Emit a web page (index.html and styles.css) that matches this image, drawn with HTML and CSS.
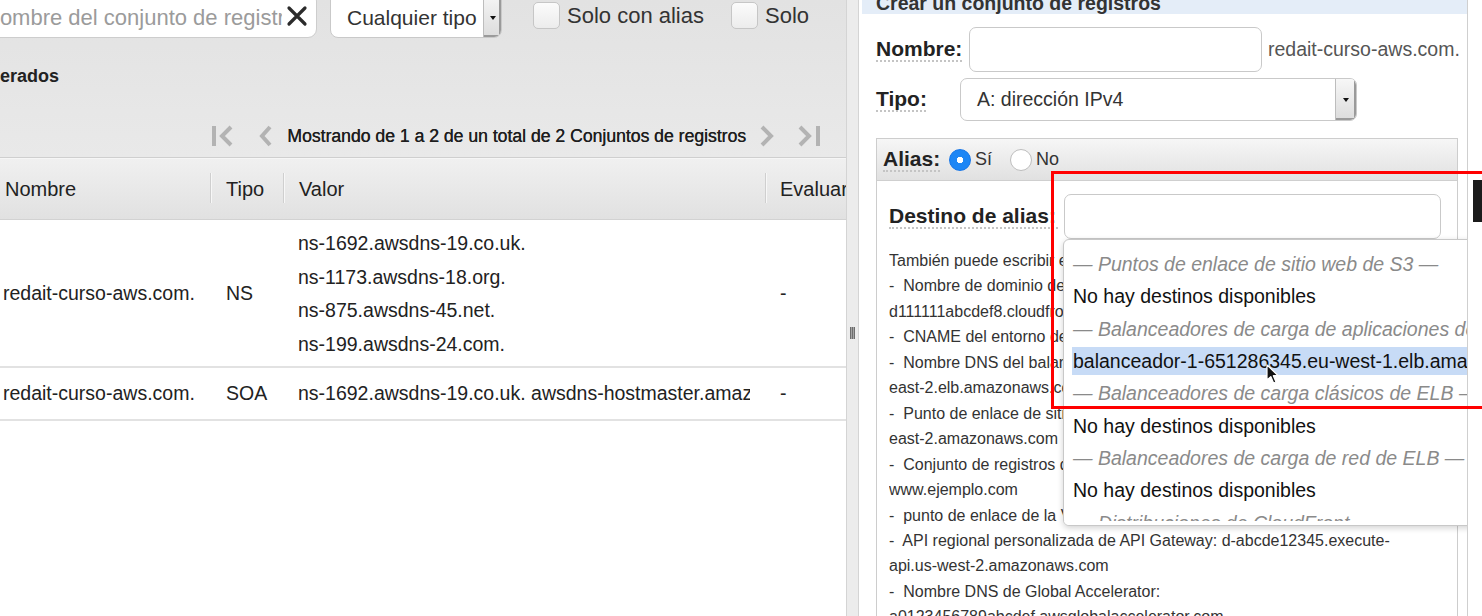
FILE: index.html
```html
<!DOCTYPE html>
<html lang="es">
<head>
<meta charset="utf-8">
<title>Route 53 - Crear un conjunto de registros</title>
<link rel="stylesheet" href="styles.css">
</head>
<body>
<div class="app">
  <section class="left">
    <div class="left-top">
      <div class="toolbar">
        <div class="search">
          <span class="placeholder">Nombre del conjunto de registros</span>
          <svg class="clear" width="22" height="22" viewBox="0 0 22 22"><path d="M3 3 L19 19 M19 3 L3 19" stroke="#2b2b2b" stroke-width="3.2" stroke-linecap="round"/></svg>
        </div>
        <div class="select type-select">
          <span class="select-text">Cualquier tipo</span>
          <span class="select-arrow"><i class="tri"></i></span>
        </div>
        <label class="check"><span class="box"></span>Solo con alias</label>
        <label class="check check-2"><span class="box"></span>Solo</label>
      </div>
      <div class="section-title">erados</div>
      <div class="pager">
        <svg class="pg-first" width="24" height="24" viewBox="0 0 24 24"><rect x="1" y="2" width="4" height="20" fill="#b3b3b3"/><path d="M20 3 L11 12 L20 21" fill="none" stroke="#b3b3b3" stroke-width="4"/></svg>
        <svg class="pg-prev" width="14" height="22" viewBox="0 0 14 22"><path d="M12 2 L4 11 L12 20" fill="none" stroke="#b3b3b3" stroke-width="4"/></svg>
        <span class="pg-text">Mostrando de 1 a 2 de un total de 2 Conjuntos de registros</span>
        <svg class="pg-next" width="15" height="22" viewBox="0 0 15 22"><path d="M2 2 L11 11 L2 20" fill="none" stroke="#b3b3b3" stroke-width="4"/></svg>
        <svg class="pg-last" width="25" height="24" viewBox="0 0 25 24"><path d="M3 3 L12 12 L3 21" fill="none" stroke="#b3b3b3" stroke-width="4"/><rect x="19" y="2" width="4" height="20" fill="#b3b3b3"/></svg>
      </div>
    </div>
    <div class="grid">
      <div class="grid-head">
        <div class="hc c-name">Nombre</div>
        <div class="hc c-type sep">Tipo</div>
        <div class="hc c-value sep">Valor</div>
        <div class="hc c-eval sep">Evaluar</div>
      </div>
      <div class="grid-row row-ns">
        <div class="cell c-name">redait-curso-aws.com.</div>
        <div class="cell c-type">NS</div>
        <div class="cell c-value values">
          <div>ns-1692.awsdns-19.co.uk.</div>
          <div>ns-1173.awsdns-18.org.</div>
          <div>ns-875.awsdns-45.net.</div>
          <div>ns-199.awsdns-24.com.</div>
        </div>
        <div class="cell c-eval">-</div>
      </div>
      <div class="grid-row row-soa">
        <div class="cell c-name">redait-curso-aws.com.</div>
        <div class="cell c-type">SOA</div>
        <div class="cell c-value"><span class="clip">ns-1692.awsdns-19.co.uk. awsdns-hostmaster.amazon.com. 1 7200 900 1209600 86400</span></div>
        <div class="cell c-eval">-</div>
      </div>
    </div>
  </section>

  <div class="splitter"><span class="grip"></span></div>

  <section class="right">
    <div class="panel-head"><span>Crear un conjunto de registros</span></div>
    <div class="form-row row-nombre">
      <span class="lbl">Nombre:</span>
      <span class="input name-input"></span>
      <span class="suffix">redait-curso-aws.com.</span>
    </div>
    <div class="form-row row-tipo">
      <span class="lbl lbl-tipo">Tipo:</span>
      <div class="select tipo-select">
        <span class="select-text">A: dirección IPv4</span>
        <span class="select-arrow"><i class="tri"></i></span>
      </div>
    </div>
    <div class="alias-box">
      <div class="alias-head">
        <span class="lbl">Alias:</span>
        <span class="radio on"></span><span class="radio-text">Sí</span>
        <span class="radio"></span><span class="radio-text">No</span>
      </div>
      <div class="alias-body">
        <div class="dest-row">
          <span class="lbl">Destino de alias:</span>
          <div class="dest-wrap">
            <span class="input dest-input"></span>
            <div class="dropdown">
              <div class="opt grp">— Puntos de enlace de sitio web de S3 —</div>
              <div class="opt">No hay destinos disponibles</div>
              <div class="opt grp">— Balanceadores de carga de aplicaciones de ELB —</div>
              <div class="opt sel">balanceador-1-651286345.eu-west-1.elb.amazonaws.com.</div>
              <div class="opt grp">— Balanceadores de carga clásicos de ELB —</div>
              <div class="opt">No hay destinos disponibles</div>
              <div class="opt grp">— Balanceadores de carga de red de ELB —</div>
              <div class="opt">No hay destinos disponibles</div>
              <div class="opt grp">— Distribuciones de CloudFront —</div>
            </div>
          </div>
        </div>
        <div class="help">
          <div>También puede escribir el nombre de dominio de los siguientes recursos:</div>
          <div>-  Nombre de dominio de la distribución de CloudFront:</div>
          <div>d111111abcdef8.cloudfront.net</div>
          <div>-  CNAME del entorno de Elastic Beanstalk: example.elasticbeanstalk.com</div>
          <div>-  Nombre DNS del balanceador de carga de ELB: example-1.us-</div>
          <div>east-2.elb.amazonaws.com</div>
          <div>-  Punto de enlace de sitio web de S3: s3-website.us-</div>
          <div>east-2.amazonaws.com</div>
          <div>-  Conjunto de registros de recursos en esta zona alojada:</div>
          <div>www.ejemplo.com</div>
          <div>-  punto de enlace de la VPC: example.us-east-2.vpce.amazonaws.com</div>
          <div>-  API regional personalizada de API Gateway: d-abcde12345.execute-</div>
          <div>api.us-west-2.amazonaws.com</div>
          <div>-  Nombre DNS de Global Accelerator:</div>
          <div>a0123456789abcdef.awsglobalaccelerator.com</div>
        </div>
      </div>
    </div>
  </section>
  <div class="edge"></div>

  <div class="annotation"></div>
  <div class="dark-tab"></div>
  <svg class="cursor" width="14" height="21" viewBox="0 0 14 21"><path d="M1 1 L1 16 L4.8 12.6 L7.6 19 L10 18 L7.3 11.7 L12.2 11.7 Z" fill="#111" stroke="#fff" stroke-width="1.2" stroke-linejoin="round"/></svg>
</div>
</body>
</html>
```

FILE: styles.css
```css
* { box-sizing: border-box; }
html, body { margin: 0; padding: 0; }
body {
  width: 1482px;
  height: 616px;
  overflow: hidden;
  background: #fff;
  font-family: "Liberation Sans", Arial, Helvetica, sans-serif;
  color: #222;
}
.app {
  position: relative;
  display: flex;
  height: 616px;
}

/* ---------- left pane ---------- */
.left {
  width: 846px;
  flex: none;
  display: flex;
  flex-direction: column;
  background: #fff;
  overflow: hidden;
}
.left-top {
  height: 158px;
  background: linear-gradient(#e2e2e2, #e9e9e9);
  border-bottom: 1px solid #cfcfcf;
}
.toolbar {
  height: 38px;
  display: flex;
  align-items: flex-end;
}
.search {
  margin-left: -30px;
  width: 347px;
  height: 46px;
  flex: none;
  display: flex;
  align-items: center;
  background: #fff;
  border: 1px solid #cdcdcd;
  border-radius: 9px;
  padding: 0 8px 0 13px;
}
.placeholder {
  flex: 1;
  overflow: hidden;
  white-space: nowrap;
  font-size: 22px;
  color: #9b9b9b;
  padding-top: 6px;
}
.clear { flex: none; margin-left: 4px; margin-top: 2px; }

.select {
  position: relative;
  display: flex;
  align-items: center;
  background: #fff;
  border: 1px solid #c9c9c9;
  border-radius: 8px;
  overflow: hidden;
}
.select-text {
  flex: 1;
  white-space: nowrap;
  color: #333;
}
.select-arrow {
  align-self: stretch;
  flex: none;
  display: flex;
  align-items: center;
  justify-content: center;
  background: linear-gradient(#f7f7f7, #dcdcdc);
  border-left: 1px solid #bdbdbd;
  box-shadow: inset -2px -2px 0 #9a9a9a;
}
.tri {
  width: 0;
  height: 0;
  border-left: 3.5px solid transparent;
  border-right: 3.5px solid transparent;
  border-top: 4px solid #111;
}
.type-select {
  margin-left: 13px;
  width: 172px;
  height: 46px;
  flex: none;
}
.type-select .select-text { font-size: 21px; padding-left: 16px; padding-top: 6px; }
.type-select .select-arrow { width: 18px; }
.type-select .tri { margin-top: 6px; }

.check {
  align-self: flex-start;
  margin-top: 2px;
  margin-left: 31px;
  display: flex;
  align-items: center;
  gap: 7px;
  font-size: 22px;
  color: #333;
  line-height: 27px;
}
.check-2 { margin-left: 27px; }
.box {
  width: 27px;
  height: 27px;
  border: 1px solid #c6c6c6;
  border-radius: 5px;
  background: linear-gradient(#fbfbfb, #ececec);
}

.section-title {
  margin-top: 26px;
  height: 24px;
  line-height: 24px;
  font-size: 18px;
  font-weight: bold;
  color: #222;
}

.pager {
  margin-top: 36px;
  height: 24px;
  display: flex;
  align-items: center;
  justify-content: flex-end;
  padding-right: 24px;
}
.pg-first { margin-right: 23px; }
.pg-prev { margin-right: 15px; }
.pg-text {
  font-size: 17.6px;
  color: #1e1e1e;
  white-space: nowrap;
  margin-right: 14px;
  text-shadow: 0.3px 0 0 #1e1e1e;
}
.pg-next { margin-right: 22px; }

/* table */
.grid { flex: 1; }
.grid-head {
  display: grid;
  grid-template-columns: 210px 73px 482px 1fr;
  height: 62px;
  background: linear-gradient(#f0f0f0, #e1e1e1);
  border-top: 1px solid #f6f6f6;
  border-bottom: 1px solid #d2d2d2;
}
.hc {
  position: relative;
  display: flex;
  align-items: center;
  font-size: 20px;
  color: #222;
  white-space: nowrap;
  overflow: hidden;
}
.sep::before {
  content: "";
  position: absolute;
  left: 0;
  top: 14px;
  height: 30px;
  width: 1px;
  background: #cfcfcf;
  box-shadow: 1px 0 0 #f7f7f7;
}
.c-name { padding-left: 4px; }
.c-type { padding-left: 16px; }
.c-value { padding-left: 15px; }
.c-eval { padding-left: 15px; }
.hc.c-name { padding-left: 5px; }
.hc.c-value { padding-left: 16px; }

.grid-row {
  display: grid;
  grid-template-columns: 210px 73px 482px 1fr;
  border-bottom: 2px solid #e2e2e2;
  font-size: 19.5px;
  color: #222;
}
.cell {
  display: flex;
  align-items: center;
  white-space: nowrap;
}
.grid-row .c-name { padding-left: 3px; }
.row-ns { height: 148px; }
.row-ns .values {
  flex-direction: column;
  align-items: flex-start;
  justify-content: flex-start;
  padding-top: 7px;
  line-height: 33.5px;
}
.row-soa { height: 53px; }
.clip {
  display: block;
  width: 452px;
  overflow: hidden;
}

/* ---------- splitter ---------- */
.splitter {
  width: 13px;
  flex: none;
  background: #ececec;
  border-left: 1px solid #d4d4d4;
  border-right: 1px solid #d4d4d4;
  display: flex;
  justify-content: center;
  align-items: flex-start;
}
.grip {
  margin-top: 327px;
  width: 5px;
  height: 12px;
  background: repeating-linear-gradient(90deg, #6d6d6d 0 1px, #a4a4a4 1px 2px);
}

/* ---------- right pane ---------- */
.right {
  width: 609px;
  flex: none;
  background: #fff;
  border-right: 1px solid #cfcfcf;
  padding-left: 3px;
  overflow: hidden;
}
.panel-head {
  height: 14px;
  overflow: hidden;
  background: #e4edf8;
  padding-left: 14px;
}
.panel-head span {
  display: block;
  margin-top: -9px;
  line-height: 24px;
  font-size: 19.5px;
  font-weight: bold;
  color: #333;
  white-space: nowrap;
}
.form-row {
  display: flex;
  align-items: center;
  padding-left: 14px;
}
.lbl {
  font-size: 21px;
  font-weight: bold;
  color: #222;
  white-space: nowrap;
  border-bottom: 2px dotted #c4c4c4;
  line-height: 22px;
}
.input {
  display: block;
  background: #fff;
  border: 1px solid #c9c9c9;
  border-radius: 7px;
}
.row-nombre { margin-top: 13px; }
.row-nombre .lbl { width: 86px; margin-right: 7px; }
.name-input { width: 293px; height: 45px; }
.suffix {
  margin-left: 6px;
  font-size: 19.5px;
  color: #555;
  white-space: nowrap;
}
.row-tipo { margin-top: 6px; }
.lbl-tipo { width: 50px; margin-right: 34px; }
.tipo-select {
  width: 397px;
  height: 43px;
  border-radius: 7px;
}
.tipo-select .select-text { font-size: 19.5px; padding-left: 16px; }
.tipo-select .select-arrow { width: 21px; }

.alias-box {
  margin-top: 17px;
  margin-left: 14px;
  width: 582px;
  height: 500px;
  border: 1px solid #cdcdcd;
}
.alias-head {
  height: 42px;
  display: flex;
  align-items: center;
  padding-left: 6px;
  background: linear-gradient(#f6f6f6, #e1e1e1);
  border-bottom: 1px solid #cfcfcf;
}
.alias-head .lbl { width: 57px; margin-right: 9px; }
.radio {
  width: 22px;
  height: 22px;
  border-radius: 50%;
  background: #fff;
  border: 1px solid #bdbdbd;
  flex: none;
}
.radio.on {
  border-color: #1676e8;
  background: radial-gradient(circle, #fff 0 3px, #1d86f5 3.5px);
}
.radio-text {
  margin-left: 4px;
  margin-right: 18px;
  font-size: 18px;
  color: #333;
}

.alias-body { padding: 13px 0 0 12px; }
.dest-row {
  display: flex;
  align-items: center;
}
.dest-row .lbl { width: 169px; margin-right: 6px; }
.dest-wrap { position: relative; }
.dest-input { width: 377px; height: 45px; }

.dropdown {
  position: absolute;
  top: 100%;
  left: -1px;
  width: 440px;
  height: 287px;
  overflow: hidden;
  background: #fff;
  border: 1px solid #c8c8c8;
  border-radius: 6px;
  box-shadow: 0 2px 6px rgba(0, 0, 0, 0.18);
  padding-top: 10px;
  z-index: 2;
}
.dropdown::after {
  content: "";
  position: absolute;
  left: 0;
  right: 0;
  bottom: 0;
  height: 4px;
  background: #fff;
}
.opt {
  height: 28px;
  line-height: 28px;
  margin: 0 0 4.35px 8px;
  padding-left: 1px;
  font-size: 19.5px;
  color: #111;
  white-space: nowrap;
}
.opt.grp {
  font-style: italic;
  color: #8a8a8a;
}
.opt.sel { background: #c7dbf6; }

.help {
  margin-top: 9px;
  font-size: 16px;
  line-height: 25.45px;
  color: #333;
}
.help div {
  white-space: pre;
  overflow: hidden;
}

.edge {
  flex: 1;
  background: #fff;
}

/* ---------- overlays ---------- */
.annotation {
  position: absolute;
  left: 1051px;
  top: 171px;
  width: 460px;
  height: 238px;
  border: 3px solid #f00;
  z-index: 5;
  pointer-events: none;
}
.dark-tab {
  position: absolute;
  left: 1473px;
  top: 180px;
  width: 20px;
  height: 42px;
  background: #1b1b1b;
  z-index: 6;
}
.cursor {
  position: absolute;
  left: 1266px;
  top: 364px;
  z-index: 7;
}
```
